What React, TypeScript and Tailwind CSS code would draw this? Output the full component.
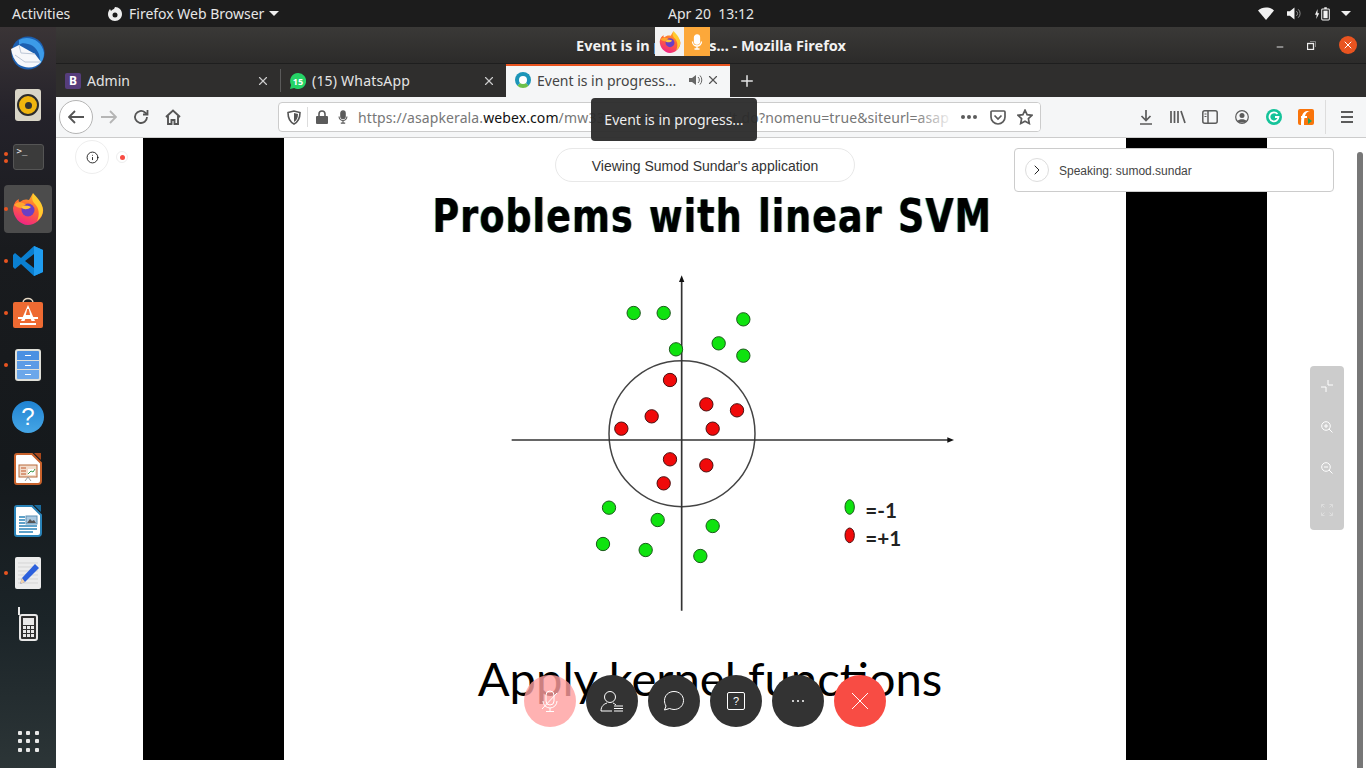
import { useId } from "react";
import { ChevronRight, Info, Minus, Plus, X } from "lucide-react";

const greenDots = [[401, 159], [491, 159], [730, 178], [656, 250], [528, 268], [730, 287], [327, 743], [473, 780], [638, 798], [309, 852], [437, 870], [601, 888]];
const redDots = [[510, 360], [619, 433], [711, 451], [455, 469], [364, 506], [638, 506], [510, 598], [619, 616], [491, 670]];

function Firefox({ size = 32 }: { size?: number }) {
  const id = useId();
  return (
    <svg width={size} height={size} viewBox="0 0 32 32">
      <defs>
        <linearGradient id={id} x1="0.7" y1="0" x2="0.3" y2="1">
          <stop offset="0" stopColor="#ffb02e" />
          <stop offset="0.45" stopColor="#ff6a30" />
          <stop offset="1" stopColor="#f0208a" />
        </linearGradient>
      </defs>
      <path d="M1 15 C2 10 4 7 7 6 C6 8 7 9 8 9 C11 6 15 6 17 7 L21 0 C21 4 23 5 25 7 C29 11 32 15 31 19 C30 26 23 32 16 32 C8 32 1 24 1 15Z" fill={`url(#${id})`} />
      <path d="M21 0 C24 4 30 8 31 17 C31 21 29 25 25 28 C28 22 27 15 23 11 C21 9 19 6 21 1Z" fill="#ffcb2e" />
      <circle cx="16" cy="17" r="6.500" fill="#6a3fc4" />
      <path d="M2 12 C6 8 11 9 14 12 C11 13 9 14 9 15 C7 15 4 14 2 12Z" fill="#ffa42e" />
      <path d="M9 14 C11 17 16 17 19 14 C17 13 13 12 9 14Z" fill="#ffc43a" />
    </svg>
  );
}

function Mic({ className = "", stroke = "currentColor" }: { className?: string; stroke?: string }) {
  return (
    <svg className={className} viewBox="0 0 16 16" fill="none" stroke={stroke} strokeWidth="1.3">
      <rect x="5.500" y="1" width="5" height="9" rx="2.500" fill={stroke} />
      <path d="M3.500 7.500a4.500 4.500 0 0 0 9 0M8 12v3M5.500 15h5" />
    </svg>
  );
}

function TerminalIcon() {
  return (
    <div className="w-[31px] h-[26px] rounded-[3px] bg-[#3b3b3b] border border-[#555] text-[#eee] text-[9px] leading-[10px] pl-[3px] pt-[1px] font-['DejaVu_Sans_Mono']">
      &gt;_
    </div>
  );
}

function ThunderbirdIcon() {
  return (
    <svg width="34" height="34" viewBox="0 0 34 34">
      <circle cx="17" cy="17" r="16.500" fill="#1c5fb0" />
      <path d="M8 4 C16 -1 31 3 33 17 C33 22 31 26 28 29 C31 20 26 10 17 8 C13 7 10 7 8 9Z" fill="#3c9be8" />
      <path d="M0 13 L8 9 L24 18 L30 26 C24 33 14 33 7 28 C3 24 1 19 0 13Z" fill="#f6f7fa" />
      <path d="M8 9 L10 17 L24 18 M4 19 L14 26 L29 26" stroke="#bcc6d6" strokeWidth="1" fill="none" />
    </svg>
  );
}

function RhythmboxIcon() {
  return (
    <div className="w-[26px] h-[32px] rounded-[3px] bg-[#d9d5c7] flex items-center justify-center">
      <div className="w-[22px] h-[22px] rounded-full bg-[#f0b50e] border-[2px] border-[#2c2c2c] flex items-center justify-center">
        <div className="w-[7px] h-[7px] rounded-full bg-[#333]" />
      </div>
    </div>
  );
}

function VsCodeIcon() {
  return (
    <svg width="32" height="32" viewBox="0 0 32 32">
      <path d="M22 1 L31 5 V27 L22 31 L9 19 L3 24 L1 22 V10 L3 8 L9 13Z M22 9 L13 16 L22 23Z" fill="#0a7fd0" fillRule="evenodd" />
      <path d="M22 1 L31 5 V27 L22 31Z" fill="#1f9cf0" />
    </svg>
  );
}

function AppStoreIcon() {
  return (
    <svg width="32" height="32" viewBox="0 0 32 32">
      <path d="M11 6 C11 0 21 0 21 6" fill="none" stroke="#e8d9c4" strokeWidth="1.500" />
      <rect x="1" y="5" width="30" height="26" rx="2" fill="#ee6a32" />
      <path d="M16 8 L23 24 H19.500 L18 20 H14 L12.500 24 H9 Z" fill="#fff" />
      <path d="M6 20 H26 V22 H6Z M8 26 H24 V28 H8Z" fill="#fff" />
      <path d="M15.200 12 L13.800 18 H18.200 L16.800 12Z" fill="#ee6a32" />
    </svg>
  );
}

function FilesIcon() {
  return (
    <div className="w-[26px] h-[32px] rounded-[3px] bg-[#dfdfd8] p-[2px] flex flex-col gap-[1px]">
      <div className="flex-1 bg-[#4a90e2] rounded-t-[1px] flex items-center justify-center"><div className="w-[6px] h-[1px] bg-white" /></div>
      <div className="flex-1 bg-[#5b9be6] flex items-center justify-center"><div className="w-[6px] h-[1px] bg-white" /></div>
      <div className="flex-1 bg-[#6ba7ea] rounded-b-[1px] flex items-center justify-center"><div className="w-[6px] h-[1px] bg-white" /></div>
    </div>
  );
}

function HelpIcon() {
  return (
    <div className="w-[32px] h-[32px] rounded-full bg-gradient-to-b from-[#1f83d2] to-[#45a6e6] text-white flex items-center justify-center text-[24px] font-['Liberation_Sans']">
      ?
    </div>
  );
}

function DocIcon({ color, corner, kind }: { color: string; corner: string; kind: string }) {
  return (
    <svg width="28" height="32" viewBox="0 0 28 32">
      <path d="M3 1 H18 L27 10 V28 A3 3 0 0 1 24 31 H3 A2 2 0 0 1 1 29 V3 A2 2 0 0 1 3 1Z" fill="#fff" stroke={color} strokeWidth="2" />
      <path d="M20 0 H27 V7Z" fill={corner} />
      {kind === "impress" ? (
        <g>
          <rect x="5" y="12" width="18" height="12" fill="#f2dccb" stroke="#b96a3b" />
          <path d="M7 15h5M7 18h5M7 21h5" stroke="#c0562a" />
          <rect x="14" y="16" width="7" height="6" fill="#fff" />
          <path d="M14 21l3-3 2 1 2-3" stroke="#3a9a4a" fill="none" />
          <path d="M11 28l3-4 3 4" stroke="#999" fill="none" />
        </g>
      ) : (
        <g>
          <path d="M5 12h6M5 15h6M5 18h6M5 21h18M5 24h18M5 27h14" stroke={color} strokeWidth="1.500" />
          <rect x="12" y="11" width="11" height="8" fill="#a9c8e0" stroke="#5b90b5" />
          <path d="M13 18l3-4 2 2 2-1 2 3Z" fill="#555" />
        </g>
      )}
    </svg>
  );
}

function GeditIcon() {
  return (
    <svg width="26" height="32" viewBox="0 0 26 32">
      <rect width="26" height="32" rx="2" fill="#ececec" />
      <path d="M3 6h20M3 10h20M3 14h20M3 18h20M3 22h20M3 26h20" stroke="#d5d5d5" />
      <path d="M20 7 L24 11 L10 25 L5 27 L7 21Z" fill="#2c60dc" />
      <path d="M7 21 L10 25 L5 27Z" fill="#f3d2a8" />
    </svg>
  );
}

function PhoneIcon() {
  const keys = Array.from({ length: 9 });
  return (
    <div className="relative w-[19px] h-[27px] mt-[5px] border-[2px] border-[#e8e8e8] rounded-[3px] bg-[#2f2f2f] p-[2px]">
      <div className="absolute left-[-3px] bottom-[24px] w-[2px] h-[8px] bg-[#e8e8e8]" />
      <div className="h-[7px] bg-[#e8e8e8] mb-[1px]" />
      <div className="grid grid-cols-3 gap-[1px]">
        {keys.map((_, i) => (
          <div key={i} className="h-[3px] bg-[#e8e8e8]" />
        ))}
      </div>
    </div>
  );
}

function DockItem({ children, dots = 0, active = false }: { children: React.ReactNode; dots?: number; active?: boolean }) {
  return (
    <div className="relative h-[52px] flex items-center justify-center">
      {active && <div className="absolute left-[4px] top-[2px] w-[48px] h-[48px] rounded-[4px] bg-[#4c4c4c]" />}
      {dots > 0 && (
        <div className="absolute left-[4px] top-0 h-full flex flex-col justify-center gap-[3px]">
          {Array.from({ length: dots }).map((_, i) => (
            <div key={i} className="w-[4px] h-[4px] rounded-full bg-[#e95420]" />
          ))}
        </div>
      )}
      <div className="relative flex items-center justify-center">{children}</div>
    </div>
  );
}

function Dock() {
  return (
    <div className="w-[56px] shrink-0 flex flex-col bg-[linear-gradient(180deg,#3a3436_0%,#24222a_12%,#191b1e_30%,#15191c_60%,#1b2428_80%,#2c3537_100%)]">
      <DockItem><ThunderbirdIcon /></DockItem>
      <DockItem><RhythmboxIcon /></DockItem>
      <DockItem dots={2}><TerminalIcon /></DockItem>
      <DockItem dots={1} active><Firefox /></DockItem>
      <DockItem dots={1}><VsCodeIcon /></DockItem>
      <DockItem dots={1}><AppStoreIcon /></DockItem>
      <DockItem dots={1}><FilesIcon /></DockItem>
      <DockItem><HelpIcon /></DockItem>
      <DockItem><DocIcon color="#c8622c" corner="#a8481c" kind="impress" /></DockItem>
      <DockItem><DocIcon color="#2a83b8" corner="#1a6a9c" kind="writer" /></DockItem>
      <DockItem dots={1}><GeditIcon /></DockItem>
      <DockItem><PhoneIcon /></DockItem>
      <div className="mt-auto mb-[1px] h-[52px] flex items-center justify-center">
        <div className="grid grid-cols-3 gap-[4.500px]">
          {Array.from({ length: 9 }).map((_, i) => (
            <div key={i} className="w-[4px] h-[4px] rounded-[1px] bg-[#e8e8e8]" />
          ))}
        </div>
      </div>
    </div>
  );
}

function TopBar() {
  return (
    <div className="relative h-[27px] shrink-0 bg-[#1c1c1c] text-[#e6e6e6] text-[14px] flex items-center font-['Noto_Sans']">
      <span className="ml-[12px] w-[95px]">Activities</span>
      <svg width="16" height="16" viewBox="0 0 16 16" className="mr-[6px]">
        <path d="M8 1 C12 1 15 4 15 8 C15 12 12 15 8 15 C4 15 1 12 1 8 C1 6 2 4 3 3 L4 5 C5 4 6 3 7 3Z" fill="#eee" />
        <circle cx="8" cy="9" r="2.500" fill="#1c1c1c" />
      </svg>
      <span>Firefox Web Browser</span>
      <div className="ml-[5px] w-0 h-0 border-x-[5px] border-x-transparent border-t-[5px] border-t-[#eee]" />
      <span className="absolute left-[668px] whitespace-pre">Apr 20  13:12</span>
      <div className="ml-auto mr-[15px] flex items-center">
        <svg width="16" height="13" viewBox="0 0 16 13"><path d="M0 3.500 C4 -0.500 12 -0.500 16 3.500 L8 13Z" fill="#f2f2f2" /></svg>
        <svg width="14" height="13" viewBox="0 0 15 13" fill="none" className="ml-[13px]">
          <path d="M0 4h3l5-4v13l-5-4H0Z" fill="#f2f2f2" />
          <path d="M10 4a3 3 0 0 1 0 5M12 2a6 6 0 0 1 0 9" stroke="#999" />
        </svg>
        <svg width="16" height="14" viewBox="0 0 19 16" fill="none" className="ml-[14px]">
          <path d="M3 2 L0 9 H2 L1.500 14 L5 7 H3Z" fill="#f2f2f2" />
          <rect x="8" y="2" width="9" height="13" rx="1" stroke="#f2f2f2" strokeWidth="1.200" />
          <rect x="10" y="4" width="5" height="9" fill="#f2f2f2" />
          <rect x="11" y="0" width="3" height="2" fill="#f2f2f2" />
        </svg>
        <div className="ml-[10px] w-0 h-0 border-x-[5px] border-x-transparent border-t-[5px] border-t-[#eee]" />
      </div>
    </div>
  );
}

function TitleBar() {
  return (
    <div className="relative h-[37px] shrink-0 bg-gradient-to-b from-[#3a3937] to-[#2c2b2a] border-b border-[#1e1e1e] flex items-center justify-center">
      <span className="pt-[2px] text-[14.500px] font-bold text-[#f2f2f2] font-['Noto_Sans']">Event is in progress... - Mozilla Firefox</span>
      <div className="absolute left-[599px] top-0 flex h-[29px]">
        <div className="w-[29px] bg-[#f2f2f2] flex items-center justify-center"><Firefox size={22} /></div>
        <div className="w-[26px] bg-[#fca83a] flex items-center justify-center"><Mic className="w-[16px] h-[16px]" stroke="#fff" /></div>
      </div>
      <div className="absolute right-[9px] top-0 h-full flex items-center text-white">
        <Minus className="w-[10px] h-[10px] mr-[22px] mt-[3px]" strokeWidth={2} />
        <svg width="9" height="9" viewBox="0 0 9 9" fill="none" className="mr-[23px]" stroke="#eee">
          <rect x="0.500" y="2.500" width="6" height="6" strokeWidth="1.300" />
          <path d="M3 0.500h5.500V6" strokeWidth="0.800" stroke="#999" />
        </svg>
        <div className="w-[18px] h-[18px] rounded-full bg-[#e95420] flex items-center justify-center">
          <X className="w-[12px] h-[12px]" strokeWidth={2} />
        </div>
      </div>
    </div>
  );
}

function TabBar() {
  return (
    <div className="h-[33px] shrink-0 bg-[#2f2e2d] flex items-center font-['Noto_Sans']">
      <div className="w-[224px] h-full flex items-center pl-[9px] text-[#e4e4e4]">
        <div className="w-[16px] h-[16px] rounded-[2px] bg-[#563d7c] text-white text-[12px] font-bold flex items-center justify-center">B</div>
        <span className="ml-[6px] text-[14px] flex-1">Admin</span>
        <X className="w-[14px] h-[14px] mr-[10px] text-[#ccc]" strokeWidth={2} />
      </div>
      <div className="w-[1px] h-[23px] bg-[#5a5a5a]" />
      <div className="w-[225px] h-full flex items-center pl-[9px] text-[#e4e4e4]">
        <svg width="16" height="16" viewBox="0 0 16 16">
          <path d="M8 0a8 8 0 1 1-3.800 15L0 16l1.100-4.100A8 8 0 0 1 8 0Z" fill="#25d366" />
          <text x="8" y="11.500" textAnchor="middle" fontSize="9" fontWeight="bold" fill="#fff" fontFamily="Noto Sans, sans-serif">15</text>
        </svg>
        <span className="ml-[6px] text-[14px] tracking-[0.2px] flex-1">(15) WhatsApp</span>
        <X className="w-[14px] h-[14px] mr-[10px] text-[#ccc]" strokeWidth={2} />
      </div>
      <div className="w-[224px] h-full pb-[3px] flex items-center pl-[9px] bg-[#f5f6f7] border-t-[2px] border-[#e95420] text-[#444]">
        <div className="w-[16px] h-[16px] rounded-full border-[4px] border-[#1c95b8] border-b-[#6cc04a] bg-white" />
        <span className="ml-[6px] text-[14px] flex-1 whitespace-nowrap">Event is in progress...</span>
        <svg width="14" height="14" viewBox="0 0 14 14" fill="none" className="mr-[3px]">
          <path d="M0 5h3l4-3v10l-4-3H0Z" fill="#666" />
          <path d="M9 4a4 4 0 0 1 0 6M11 2.500a6.500 6.500 0 0 1 0 9" stroke="#666" />
        </svg>
        <X className="w-[14px] h-[14px] mr-[10px] text-[#555]" strokeWidth={2} />
      </div>
      <Plus className="w-[18px] h-[18px] ml-[8px] text-[#e4e4e4]" strokeWidth={2} />
    </div>
  );
}

function NavBar() {
  return (
    <div className="relative h-[41px] shrink-0 bg-[#f5f6f7] border-b border-[#ccc] flex items-center text-[#5b5b5b]">
      <div className="ml-[3px] w-[34px] h-[34px] rounded-full bg-white border border-[#b5b5b5] flex items-center justify-center">
        <svg width="16" height="14" viewBox="0 0 16 14" fill="none" stroke="#555" strokeWidth="1.800"><path d="M16 7H1.500M7 1L1 7l6 6" /></svg>
      </div>
      <svg width="16" height="14" viewBox="0 0 16 14" fill="none" stroke="#b5b5b5" strokeWidth="1.800" className="ml-[8px]"><path d="M0 7h14.500M9 1l6 6-6 6" /></svg>
      <svg width="16" height="16" viewBox="0 0 16 16" fill="none" stroke="#555" strokeWidth="1.800" className="ml-[16px]">
        <path d="M14 8a6 6 0 1 1-2-4.500L14 5" />
        <path d="M14.500 1v4.500H10" />
      </svg>
      <svg width="16" height="16" viewBox="0 0 16 16" fill="none" stroke="#555" strokeWidth="1.900" className="ml-[16px]">
        <path d="M1 8l7-6.500L15 8M3 7v8h3.500v-4h3v4H13V7" />
      </svg>
      <div className="relative ml-[97px] w-[763px] h-[30px] bg-white border border-[#ccc] rounded-[4px] flex items-center overflow-hidden">
        <svg width="14" height="15" viewBox="0 0 14 15" className="ml-[8px]" fill="none" stroke="#555" strokeWidth="1.600">
          <path d="M1 2.500 L7 1 L13 2.500 C13 8 11 12 7 14 C3 12 1 8 1 2.500Z" />
          <path d="M7 3 L11 4 C11 8 9.500 10.500 7 12Z" fill="#555" stroke="none" />
        </svg>
        <div className="w-[1px] h-[20px] bg-[#ddd] ml-[6px]" />
        <svg width="12" height="14" viewBox="0 0 12 14" className="ml-[8px]" fill="#5b5b5b">
          <path d="M1 6h10a1 1 0 0 1 1 1v6a1 1 0 0 1-1 1H1a1 1 0 0 1-1-1V7a1 1 0 0 1 1-1Z" />
          <path d="M3 6V4a3 3 0 0 1 6 0v2" fill="none" stroke="#5b5b5b" strokeWidth="1.600" />
        </svg>
        <Mic className="w-[14px] h-[14px] ml-[8px]" stroke="#5b5b5b" />
        <div className="ml-[8px] whitespace-nowrap text-[14px] tracking-[0.1px] text-[#777] font-['Noto_Sans']">
          https://asapkerala.<span className="text-[#111]">webex.com</span><span className="tracking-[0.2px]">/mw3300/member/default.do</span>?nomenu=true&amp;siteurl=asap
        </div>
        <div className="absolute left-[635px] top-0 w-[40px] h-full bg-gradient-to-r from-transparent to-white" />
        <div className="absolute left-[675px] top-0 bottom-0 right-0 bg-white flex items-center">
          <div className="flex gap-[2px] ml-[7px]">
            <div className="w-[4px] h-[4px] rounded-full bg-[#5b5b5b]" />
            <div className="w-[4px] h-[4px] rounded-full bg-[#5b5b5b]" />
            <div className="w-[4px] h-[4px] rounded-full bg-[#5b5b5b]" />
          </div>
          <svg width="16" height="15" viewBox="0 0 16 15" fill="none" stroke="#5b5b5b" strokeWidth="1.700" className="ml-[13px]">
            <path d="M2 1h12a1 1 0 0 1 1 1v5a7 7 0 0 1-14 0V2a1 1 0 0 1 1-1Z" />
            <path d="M4.500 5.500L8 9l3.500-3.500" />
          </svg>
          <svg width="16" height="16" viewBox="0 0 16 16" fill="none" stroke="#5b5b5b" strokeWidth="1.700" className="ml-[11px]">
            <path d="M8 1.200l2.100 4.500 4.900.6-3.600 3.300.9 4.900L8 12.200l-4.300 2.300.9-4.900L1 6.300l4.900-.6Z" />
          </svg>
        </div>
      </div>
      <svg width="14" height="16" viewBox="0 0 14 16" fill="none" stroke="#5b5b5b" strokeWidth="1.700" className="ml-[98px]">
        <path d="M7 1v10M2.500 7L7 11.500 11.500 7M1 15h12" />
      </svg>
      <svg width="16" height="14" viewBox="0 0 16 14" fill="none" stroke="#5b5b5b" strokeWidth="1.700" className="ml-[17px]">
        <path d="M1 1v12M4.500 1v12M8 1v12M11 1l4 12" />
      </svg>
      <svg width="16" height="14" viewBox="0 0 16 14" fill="none" stroke="#5b5b5b" strokeWidth="1.500" className="ml-[16px]">
        <rect x="0.800" y="0.800" width="14.400" height="12.400" rx="2" />
        <path d="M6 1v12" />
        <path d="M2.500 4h2M2.500 6.500h2" strokeWidth="1" />
      </svg>
      <svg width="14" height="14" viewBox="0 0 14 14" className="ml-[17px]">
        <circle cx="7" cy="7" r="6.300" fill="none" stroke="#5b5b5b" strokeWidth="1.200" />
        <circle cx="7" cy="5.500" r="2.500" fill="#5b5b5b" />
        <path d="M2.500 11 C4 8.500 10 8.500 11.500 11 C10 13 4 13 2.500 11Z" fill="#5b5b5b" />
      </svg>
      <svg width="16" height="16" viewBox="0 0 16 16" className="ml-[17px]">
        <circle cx="8" cy="8" r="8" fill="#15c39a" />
        <path d="M11.500 5 A4.500 4.500 0 1 0 12.500 8 H9" fill="none" stroke="#fff" strokeWidth="1.800" />
      </svg>
      <svg width="16" height="16" viewBox="0 0 16 16" className="ml-[16px]">
        <rect width="16" height="16" rx="2" fill="#f9740b" />
        <path d="M6 16 C6 8 7 3 12 2 L9 2 C4 3 3 8 3 16Z" fill="#fff" />
        <path d="M3 7h6v2H3Z" fill="#fff" />
        <path d="M10 9l4 3-4 3Z" fill="#1fa35c" />
      </svg>
      <div className="w-[1px] h-[34px] bg-[#ddd] ml-[11px]" />
      <svg width="14" height="12" viewBox="0 0 14 12" stroke="#5b5b5b" strokeWidth="1.800" className="ml-[14px]">
        <path d="M1 1h12M1 6h12M1 11h12" />
      </svg>
    </div>
  );
}

function Diagram() {
  return (
    <svg width="460" height="360" viewBox="0 0 1380 1080" className="self-start ml-[216px] mt-[15px] shrink-0">
      <circle cx="546" cy="521" r="219" fill="none" stroke="#444" strokeWidth="4.500" />
      <path d="M35 540 H1345" stroke="#333" strokeWidth="5" />
      <path d="M1342 532 L1362 540 L1342 548Z" fill="#111" />
      <path d="M545 60 V1052" stroke="#333" strokeWidth="5" />
      <path d="M537 66 L545 46 L553 66Z" fill="#111" />
      {greenDots.map(([x, y], i) => (
        <circle key={i} cx={x} cy={y} r="20" fill="#0fe30f" stroke="#1c5a1c" strokeWidth="3" />
      ))}
      {redDots.map(([x, y], i) => (
        <circle key={i} cx={x} cy={y} r="20" fill="#f00a0a" stroke="#4a1010" strokeWidth="3" />
      ))}
      <ellipse cx="1049" cy="741" rx="14" ry="22" fill="#0fe30f" stroke="#1c5a1c" strokeWidth="3" />
      <ellipse cx="1049" cy="826" rx="14" ry="22" fill="#f00a0a" stroke="#4a1010" strokeWidth="3" />
      <text x="1096" y="775" fontSize="62" fontWeight="bold" fontFamily="Lato, sans-serif" fill="#222">=-1</text>
      <text x="1096" y="859" fontSize="62" fontWeight="bold" fontFamily="Lato, sans-serif" fill="#222">=+1</text>
    </svg>
  );
}

function Slide() {
  return (
    <div className="ml-[87px] w-[1124px] h-[622px] bg-black px-[141px]">
      <div className="h-full bg-white flex flex-col items-center overflow-hidden">
        <h1 className="mt-[49px] ml-[14px] h-[58px] text-[47px] leading-[58px] font-bold tracking-[1.500px] text-black whitespace-nowrap font-['DejaVu_Sans'] [text-shadow:-1px_0_0_#39c4e8,1px_0_0_#e8a050] [word-spacing:2px] scale-x-[0.772] shrink-0">
          Problems with linear SVM
        </h1>
        <Diagram />
        <div className="mt-[29px] ml-[10px] text-[47.200px] leading-[58px] text-black font-['Lato'] whitespace-nowrap">Apply kernel functions</div>
      </div>
    </div>
  );
}

function CallButton({ children, className }: { children: React.ReactNode; className: string }) {
  return <div className={`w-[52px] h-[52px] rounded-full flex items-center justify-center ${className}`}>{children}</div>;
}

function Controls() {
  return (
    <div className="absolute left-[468px] top-[537px] flex gap-[10px]">
      <CallButton className="bg-[#ff9f9f]/80">
        <svg width="20" height="24" viewBox="0 0 20 24" fill="none" stroke="#fff" strokeWidth="1">
          <rect x="6" y="2" width="8" height="14" rx="4" />
          <path d="M3 12a7 7 0 0 0 14 0M10 19v3M6 22.500h8M2 20L17 4" />
        </svg>
      </CallButton>
      <CallButton className="bg-[#333]">
        <svg width="24" height="22" viewBox="0 0 24 22" fill="none" stroke="#fff" strokeWidth="1">
          <circle cx="10" cy="7" r="5.500" />
          <path d="M1 21 C1 16 4 14 7 13 M13 13 C14 13.500 15 14 16 15 M1 21H12" />
          <path d="M14 16h9M14 18.500h9M14 21h9" strokeWidth="1.200" />
        </svg>
      </CallButton>
      <CallButton className="bg-[#333]">
        <svg width="22" height="22" viewBox="0 0 22 22" fill="none" stroke="#fff" strokeWidth="1">
          <path d="M11 1.500 C16.500 1.500 20.500 5.500 20.500 10.500 C20.500 16 16 19.500 11 19.500 C9.500 19.500 8 19 6.500 18.500 L1.500 20 L3 16 C2 14.500 1.500 12.500 1.500 10.500 C1.500 5.500 5.500 1.500 11 1.500Z" />
        </svg>
      </CallButton>
      <CallButton className="bg-[#333]">
        <div className="w-[18px] h-[18px] rounded-[2px] border border-white text-white text-[11px] leading-none flex items-center justify-center font-['Liberation_Sans']">?</div>
      </CallButton>
      <CallButton className="bg-[#333]">
        <div className="flex gap-[3px]">
          <div className="w-[2px] h-[2px] rounded-full bg-white" />
          <div className="w-[2px] h-[2px] rounded-full bg-white" />
          <div className="w-[2px] h-[2px] rounded-full bg-white" />
        </div>
      </CallButton>
      <CallButton className="bg-[#f84c44]">
        <svg width="18" height="18" viewBox="0 0 18 18" stroke="#fff" strokeWidth="1"><path d="M1 1l16 16M17 1L1 17" /></svg>
      </CallButton>
    </div>
  );
}

function ZoomBar() {
  return (
    <div className="absolute left-[1254px] top-[228px] w-[34px] h-[164px] rounded-[4px] bg-[#cccccc] flex flex-col items-center pt-[13px] gap-[29px]">
      <svg width="14" height="14" viewBox="0 0 14 14" fill="none" stroke="#fff">
        <path d="M8 1v5h5M1 8h5v5" />
      </svg>
      <svg width="12" height="12" viewBox="0 0 12 12" fill="none" stroke="#fff" className="-mt-[1px]">
        <circle cx="5" cy="5" r="4.300" />
        <path d="M8 8l3.500 3.500M3 5h4M5 3v4" />
      </svg>
      <svg width="12" height="12" viewBox="0 0 12 12" fill="none" stroke="#fff">
        <circle cx="5" cy="5" r="4.300" />
        <path d="M8 8l3.500 3.500M3 5h4" />
      </svg>
      <svg width="12" height="12" viewBox="0 0 12 12" fill="none" stroke="#ddd" className="mt-[1px]">
        <path d="M0.500 3.500v-3h3M8.500 0.500h3v3M11.500 8.500v3h-3M3.500 11.500h-3v-3M0.500 0.500l3 3M11.500 0.500l-3 3M11.500 11.500l-3-3M0.500 11.500l3-3" />
      </svg>
    </div>
  );
}

function Content() {
  return (
    <div className="relative flex-1 bg-white overflow-hidden">
      <Slide />
      <div className="absolute left-[19px] top-[2px] w-[34px] h-[34px] rounded-full bg-white border border-[#eee] flex items-center justify-center">
        <Info className="w-[13px] h-[13px] text-black" strokeWidth={1.500} />
      </div>
      <div className="absolute left-[60px] top-[13px] w-[12px] h-[12px] rounded-full bg-white border border-[#eee] flex items-center justify-center">
        <div className="w-[5px] h-[5px] rounded-full bg-[#f84c44]" />
      </div>
      <div className="absolute left-[499px] top-[10px] w-[300px] h-[34px] pt-[2px] rounded-full bg-white border border-[#e8e8e8] flex items-center justify-center text-[14px] text-[#333] font-['Liberation_Sans']">
        Viewing Sumod Sundar's application
      </div>
      <div className="absolute left-[958px] top-[10px] w-[320px] h-[44px] rounded-[4px] bg-white border border-[#ccc] flex items-center pl-[10px] text-[12px] text-[#444] font-['Liberation_Sans']">
        <div className="w-[24px] h-[24px] rounded-full border border-[#ddd] flex items-center justify-center mr-[10px]">
          <ChevronRight className="w-[16px] h-[16px] text-[#222]" strokeWidth={1.500} />
        </div>
        <span className="pt-[2px]">Speaking: sumod.sundar</span>
      </div>
      <ZoomBar />
      <Controls />
      <div className="absolute left-[1301px] top-[14px] bottom-0 w-[6px] rounded-t-[3px] bg-[#777]" />
    </div>
  );
}

export default function App() {
  return (
    <div className="relative w-[1366px] h-[768px] overflow-hidden flex flex-col bg-white font-['Noto_Sans']">
      <TopBar />
      <div className="flex-1 flex min-h-0">
        <Dock />
        <div className="flex-1 flex flex-col min-w-0">
          <TitleBar />
          <TabBar />
          <NavBar />
          <Content />
        </div>
      </div>
      <div className="absolute left-[591px] top-[98px] w-[166px] h-[43px] rounded-[4px] bg-[#2a2a2a]/95 text-[#eee] text-[14px] flex items-center justify-center">
        Event is in progress...
      </div>
    </div>
  );
}
